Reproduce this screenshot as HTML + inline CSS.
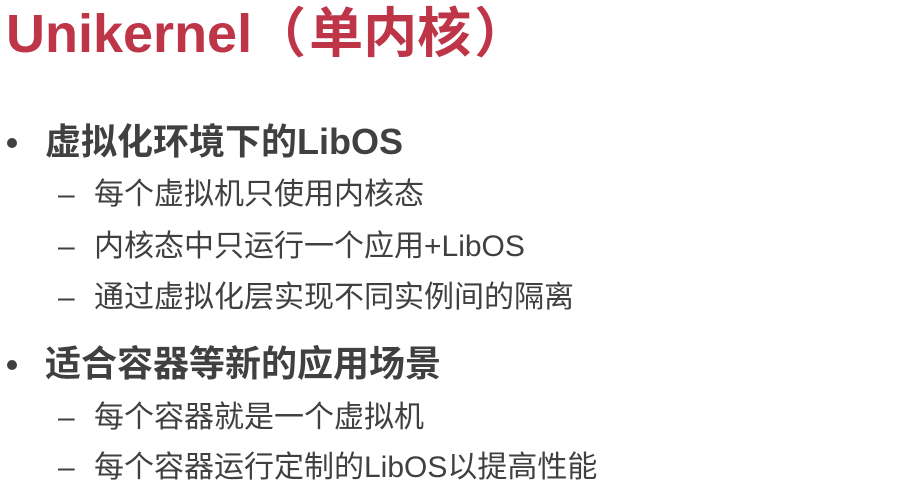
<!DOCTYPE html>
<html><head><meta charset="utf-8"><style>
html,body{margin:0;padding:0;width:919px;height:490px;background:#fff;overflow:hidden}
body{font-family:"Liberation Sans","Noto Sans CJK SC",sans-serif;color:#404040;position:relative}
.t{position:absolute;left:6px;top:2px;font-size:54px;font-weight:bold;color:#be3548;line-height:64px;white-space:nowrap}
.t span{margin:0 3px}
.l1,.l2{position:absolute;white-space:nowrap}
.l1{left:45px;font-size:36px;font-weight:bold;line-height:40px}
.l1:before{content:"";position:absolute;left:-38px;top:16px;width:10px;height:10px;border-radius:50%;background:#404040}
.l2{left:94px;font-size:30px;line-height:36px}
.l2:before{content:"–";position:absolute;left:-36px}
</style></head><body>
<div class="t">Unikernel（<span>单内核</span>）</div>
<div class="l1" style="top:122px">虚拟化环境下的LibOS</div>
<div class="l2" style="top:177px">每个虚拟机只使用内核态</div>
<div class="l2" style="top:229px">内核态中只运行一个应用+LibOS</div>
<div class="l2" style="top:280px">通过虚拟化层实现不同实例间的隔离</div>
<div class="l1" style="top:344px">适合容器等新的应用场景</div>
<div class="l2" style="top:400px">每个容器就是一个虚拟机</div>
<div class="l2" style="top:450px">每个容器运行定制的LibOS以提高性能</div>
</body></html>
